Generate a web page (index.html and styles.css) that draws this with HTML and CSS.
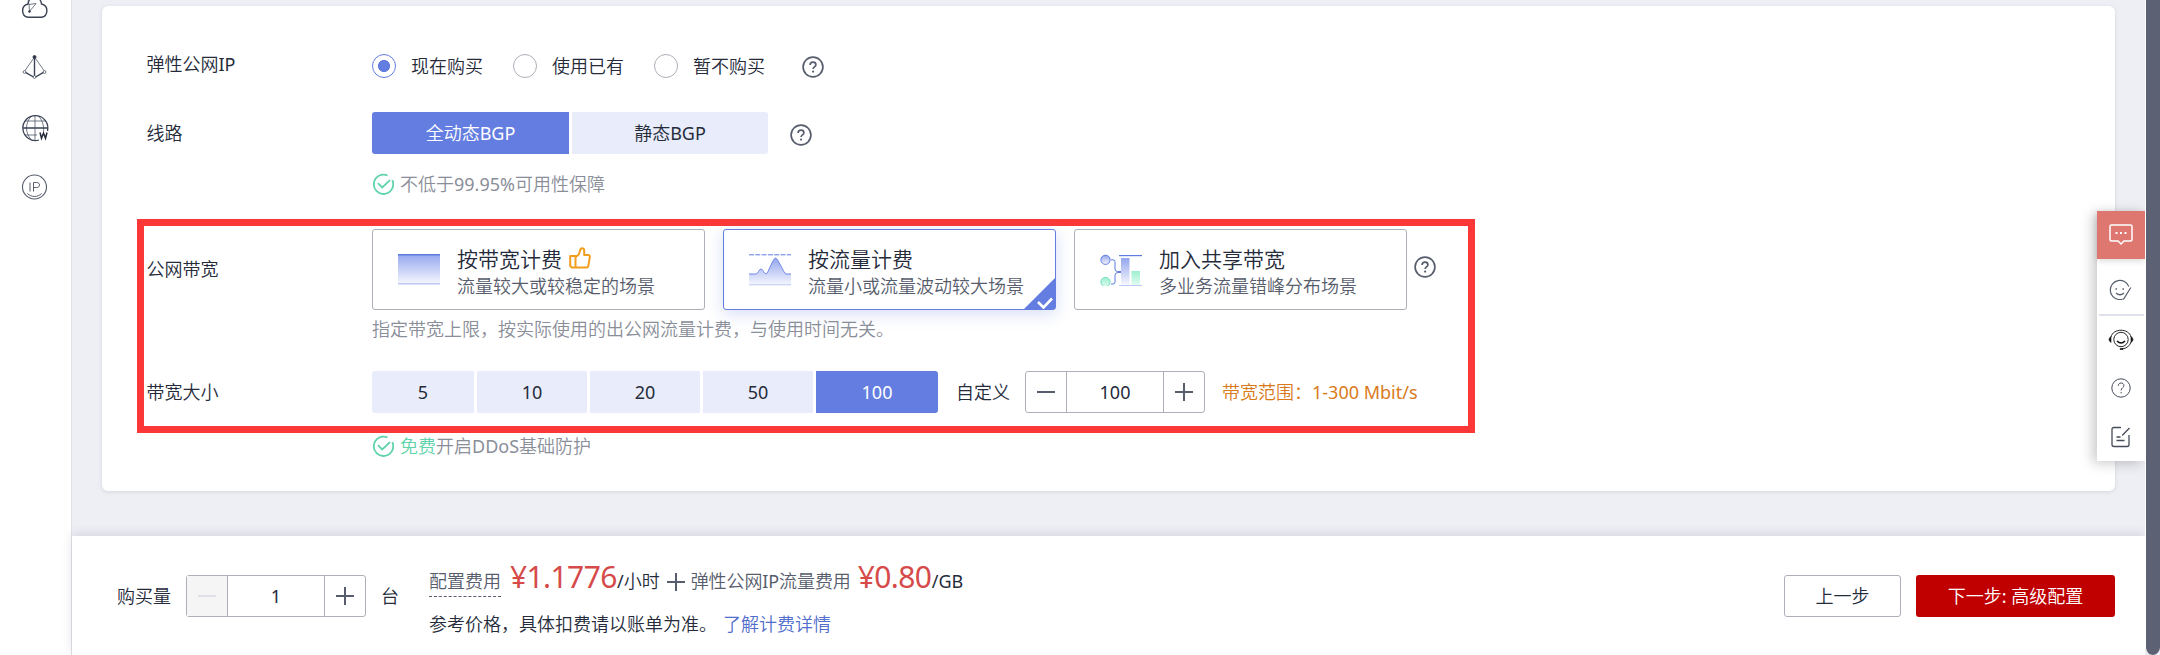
FILE: index.html
```html
<!DOCTYPE html>
<html lang="zh-CN">
<head>
<meta charset="utf-8">
<title>弹性公网IP</title>
<link rel="stylesheet" href="styles.css">
</head>
<body>
<svg class="defs" width="0" height="0" aria-hidden="true">
  <defs>
    <linearGradient id="blueFade" x1="0" y1="0" x2="0" y2="1"><stop offset="0" stop-color="#94a6ee"/><stop offset="1" stop-color="#f6f7fe"/></linearGradient>
    <linearGradient id="greenFade" x1="0" y1="0" x2="0" y2="1"><stop offset="0" stop-color="#9cf0d0"/><stop offset="1" stop-color="#e3fbf2"/></linearGradient>
    <symbol id="help" viewBox="0 0 22 22"><g fill="none" stroke="#575d6c" stroke-width="1.7"><circle cx="11" cy="11" r="9.9"/><path d="M8.1 8.9C8.1 7 9.3 6.1 11 6.1s2.9 1 2.9 2.6c0 2.1-2.8 2.3-2.8 4.4"/></g><circle cx="11.1" cy="15.6" r="1.1" fill="#575d6c"/></symbol>
    <symbol id="ok" viewBox="0 0 22 22"><g fill="none" stroke="#5fd3a9" stroke-width="1.8"><path d="M20.300 7.200A9.700 9.700 0 1 1 15.600 2.500"/><path d="M6 10.200l4.200 4.200 7.800-7.200"/></g></symbol>
  </defs>
</svg>
<div class="page">
  <nav class="side">
    <svg class="side-icon cloud" width="30" height="30" viewBox="0 0 30 30" fill="none" stroke="#3b4254"><path stroke-width="1.400" d="M8 13a6.800 6.800 0 0 0 0 13.300h13.500a6.800 6.800 0 0 0 0-13.300c-1-9-12.500-9-13.500 0z"/><path stroke-width=".7" d="M9 13.500l7-1-6.500 8zM9 13.500l-1-4"/><circle cx="9.500" cy="20.500" r=".9" fill="#3b4254"/></svg>
    <svg class="side-icon pyramid" width="30" height="30" viewBox="0 0 30 30" fill="none" stroke="#3b4254"><path stroke-width=".7" d="M14.500 5L4 20M14.500 5L25 20"/><path stroke-width="1.400" d="M14.500 5v20M5.500 20.300l8 4.700M23.500 20.300l-8 4.700"/><circle cx="14.500" cy="5" r="1.500" fill="#252b3a"/><g fill="#fff" stroke-width=".7"><circle cx="4.500" cy="20" r="1.400"/><circle cx="24.500" cy="20" r="1.400"/><circle cx="14.500" cy="25" r="1.400"/></g></svg>
    <svg class="side-icon globe" width="30" height="30" viewBox="0 0 30 30" fill="none" stroke="#3b4254"><path stroke-width="1.300" d="M19 27A12.500 12.500 0 1 1 27.500 18M2.500 15h25"/><path stroke-width=".7" d="M15 2.500v25M5 8h20M5 22h12M11 3.500c-6 7-6 16 0 23M19 3.500c4 5 5 10 4.500 15"/><path stroke-width="1.500" stroke="#252b3a" d="M20 19.500l1.500 5.700 2-5.200 2 5.200 1.500-5.700"/></svg>
    <svg class="side-icon ip" width="30" height="30" viewBox="0 0 30 30" fill="none" stroke="#575d6c"><circle cx="14.500" cy="15" r="12" stroke-width="1.100"/><path stroke-width="1" d="M10 10.500v9M13.500 19.500v-9h3.200c3.800 0 3.800 5 0 5h-3.200M7.500 21.500c4 4 10 4 14 0"/></svg>
  </nav>
  <div class="main">
    <section class="card">
      <div class="row row-eip">
        <div class="label">弹性公网IP</div>
        <div class="radios">
          <span class="radio on"><i></i>现在购买</span><span class="radio"><i></i>使用已有</span><span class="radio"><i></i>暂不购买</span>
          <svg class="help"><use href="#help"/></svg>
        </div>
      </div>
      <div class="row row-line">
        <div class="label">线路</div>
        <div class="seg line-seg"><span class="on">全动态BGP</span><span>静态BGP</span></div>
        <svg class="help"><use href="#help"/></svg>
      </div>
      <div class="tip"><svg class="ok"><use href="#ok"/></svg><span>不低于99.95%可用性保障</span></div>
      <div class="marked">
        <div class="row row-plan">
          <div class="label">公网带宽</div>
          <div class="plans">
            <div class="plan">
              <svg class="plan-icon" viewBox="0 0 42 32"><path fill="url(#blueFade)" d="M0 0h42v30H0z"/><path fill="#5e7ce0" d="M0 0h42v1.500H0z"/><path fill="#bcc8f5" d="M0 29h42v1.500H0z"/></svg>
              <div class="plan-text"><div class="plan-title">按带宽计费<svg class="thumb" viewBox="0 0 22 22" fill="none" stroke="#f29d1b" stroke-width="2" stroke-linejoin="round"><path d="M1.200 9h5.300v11.500H2.800L1.200 19zM6.500 10.200l3.300-2.700L11.300 3c.3-2.600 3.900-2.200 3.900.8v4.300h4c1.200 0 1.800.9 1.600 2l-1.400 8.500c-.2 1.200-.9 1.900-2 1.900H6.500z"/></svg></div><div class="plan-sub">流量较大或较稳定的场景</div></div>
            </div>
            <div class="plan on">
              <svg class="plan-icon" viewBox="0 0 42 32"><path stroke="#5e7ce0" stroke-dasharray="5 1.300" d="M0 .8h42"/><path fill="url(#blueFade)" d="M0 20h7c2 0 3-5 5-5s3 5 5 5S24 4 26.500 4 35 20 37 20h5v11H0z"/><path fill="none" stroke="#6f87e5" d="M0 20h7c2 0 3-5 5-5s3 5 5 5S24 4 26.500 4 35 20 37 20h5"/><path stroke="#bcc8f5" d="M0 30.800h42"/></svg>
              <div class="plan-text"><div class="plan-title">按流量计费</div><div class="plan-sub">流量小或流量波动较大场景</div></div>
              <svg class="corner" viewBox="0 0 31 31"><path fill="#637de0" d="M31 0v31H0z"/><path fill="none" stroke="#fff" stroke-width="2.600" d="M14 24l5.500 5.500 8.500-9"/></svg>
            </div>
            <div class="plan">
              <svg class="plan-icon" viewBox="0 0 42 32"><circle cx="5.500" cy="5.800" r="4.600" fill="url(#blueFade)" stroke="#5e7ce0"/><circle cx="5.500" cy="28" r="4.600" fill="url(#greenFade)" stroke="#6fdfba"/><path fill="none" stroke="#5e7ce0" d="M11 5.800h2q2 0 2 2V15q0 2.500 2.500 2.500H21M21 18.500h-3q-3 0-3 3V28q0 2-2 2h-2"/><path fill="#5e7ce0" d="M19 1h23v1.200H19z"/><path fill="url(#blueFade)" d="M21 4h8.500v27H21z"/><path fill="url(#greenFade)" d="M31.500 17H40v14h-8.500z"/><path fill="#bcc8f5" d="M19 31h23v1H19z"/></svg>
              <div class="plan-text"><div class="plan-title">加入共享带宽</div><div class="plan-sub">多业务流量错峰分布场景</div></div>
            </div>
          </div>
          <svg class="help"><use href="#help"/></svg>
        </div>
        <div class="note">指定带宽上限，按实际使用的出公网流量计费，与使用时间无关。</div>
        <div class="row row-size">
          <div class="label">带宽大小</div>
          <div class="seg size-seg"><span>5</span><span>10</span><span>20</span><span>50</span><span class="on">100</span></div>
          <div class="custom">自定义</div>
          <div class="stepper"><b class="minus"></b><span>100</span><b class="plus"></b></div>
          <div class="range">带宽范围：1-300 Mbit/s</div>
        </div>
      </div>
      <div class="tip tip-ddos"><svg class="ok"><use href="#ok"/></svg><span><em>免费</em>开启DDoS基础防护</span></div>
    </section>
    <footer class="footer">
      <span>购买量</span>
      <div class="stepper qty"><b class="minus off"></b><span>1</span><b class="plus"></b></div>
      <span class="unit">台</span>
      <div class="cost">
        <div class="prices"><span class="dashed">配置费用</span><strong class="p1">¥1.1776</strong><span class="per">/小时</span><i class="add"></i><span class="muted">弹性公网IP流量费用</span><strong class="p2">¥0.80</strong><span class="per">/GB</span></div>
        <div class="ref">参考价格，具体扣费请以账单为准。<a>了解计费详情</a></div>
      </div>
      <div class="btn prev">上一步</div>
      <div class="btn next">下一步: 高级配置</div>
    </footer>
  </div>
  <div class="scroll"></div>
  <aside class="float">
    <div class="chat"><svg width="24" height="22" viewBox="0 0 24 22" fill="none" stroke="#fff" stroke-width="1.500"><path d="M2.500 1h19q1.500 0 1.500 1.500v13q0 1.500-1.500 1.500H15l-3 3-3-3H2.500Q1 17 1 15.500v-13Q1 1 2.500 1z"/><path stroke-dasharray="2 2.500" stroke-width="2" d="M6.500 9h11"/></svg></div>
    <svg class="f-smile" width="24" height="22" viewBox="0 0 24 22" fill="none" stroke="#575d6c"><path stroke-width="1.200" d="M13 20.500H9.500A9.600 9.600 0 1 1 19.800 7.500M21.800 8.500L15 19.500l-1.500 1"/><path stroke-width="1.300" d="M7 14q4 3.500 8 0M6.500 10H8M13.500 10H15"/></svg>
    <hr>
    <svg class="f-agent" width="26" height="22" viewBox="0 0 26 22" fill="none" stroke="#111"><circle cx="13" cy="10.500" r="7.200" stroke-width=".9"/><path stroke-width=".9" d="M3 8C5-1 21-1 23 8M23 13q-2 6-9 7"/><path stroke-width="1.500" d="M9 12q4 4 8 0"/><path fill="#111" stroke-width=".6" d="M3 7.500v6q-4-3 0-6zM23 7.500v6q4-3 0-6zM12 19.500h3v1h-3z"/></svg>
    <svg class="f-help" width="20" height="20" viewBox="0 0 20 20" fill="none" stroke="#454b59"><circle cx="10" cy="10" r="9.200"/><path d="M7.300 7.900c0-4 5.600-3.700 5.600-.3 0 2.200-2.800 2.200-2.800 4.800M10.100 14v1.300"/></svg>
    <svg class="f-edit" width="20" height="22" viewBox="0 0 20 22" fill="none" stroke="#454b59" stroke-width="1.300"><path d="M10 1.500H3q-2 0-2 2v15q0 2 2 2h13q2 0 2-2V9M18.500 2l-7.300 7.500M5.500 11h4M5.500 14.500h8"/></svg>
  </aside>
</div>
</body>
</html>
```
FILE: styles.css
```css
* { box-sizing: border-box; }
body { margin: 0; overflow: hidden; background: #eeeff5; color: #252b3a; font: 400 18px/24px "Noto Sans", "Noto Sans CJK SC DemiLight", "Noto Sans CJK SC", sans-serif; }
i, em { font-style: normal; }
.defs { position: absolute; }
.page { display: flex; width: 2160px; height: 655px; position: relative; overflow: hidden; }
.side { width: 72px; flex: none; background: #fff; border-right: 1px solid #dfe1e6; padding-left: 20px; display: flex; flex-direction: column; gap: 30px; }
.side-icon { flex: none; display: block; }
.cloud { margin: -9px 0 1px; }
.globe { margin-top: 1px; }
.ip { margin-top: -1px; }
.main { flex: 1; display: flex; flex-direction: column; }
.card { width: 2013px; height: 485px; margin: 6px 0 45px 30px; background: #fff; border-radius: 6px; box-shadow: 0 1px 4px rgba(37,43,58,.12); }
.row { display: flex; }
.label { width: 226px; padding-left: .5px; }
.row-eip, .row-line { padding-left: 44px; }
.row-eip { padding-top: 47px; height: 106px; }
.row-eip .label { margin-top: -1px; }
.radios { display: flex; margin-top: 1px; height: 24px; }
.radio { display: flex; width: 141px; gap: 15px; }
.radio i { width: 24px; height: 24px; border: 1px solid #adb0b8; border-radius: 50%; }
.radio.on i { border-color: #637de0; background: radial-gradient(circle, #637de0 5.700px, transparent 6.300px); }
.help { width: 22px; height: 22px; flex: none; }
.radios .help { margin: 2px 0 0 7px; }
.row-line { height: 42px; }
.row-line .label { padding-top: 9px; }
.row-line .help { margin: 12px 0 0 22px; }
.seg { display: flex; gap: 3px; height: 42px; line-height: 42px; text-align: center; }
.seg span { background: #e9edfb; }
.seg .on { background: #637de0; color: #fff; }
.seg span:first-child { border-radius: 3px 0 0 3px; }
.seg span:last-child { border-radius: 0 3px 3px 0; }
.line-seg span { width: 196px; }
.line-seg .on { width: 197px; }
.tip { display: flex; gap: 6px; padding: 18px 0 0 270px; color: #8a8e99; }
.tip em { color: #5fd3a9; }
.ok { width: 22px; height: 22px; margin-top: 1px; }
.marked { width: 1338px; height: 214px; margin: 23px 0 0 35px; border: 7px solid #fc3737; padding: 3px 0 0 2px; }
.row-plan { height: 81px; }
.row-plan .label { padding-top: 28px; }
.plans { display: flex; gap: 18px; }
.plan { width: 333px; height: 81px; border: 1px solid #adb0b8; border-radius: 3px; padding: 16px 0 0 25px; display: flex; gap: 17px; position: relative; background: #fff; }
.plan.on { border-color: #637de0; box-shadow: 0 4px 16px rgba(94,124,224,.25); }
.plan-icon { width: 42px; height: 32px; margin-top: 8px; flex: none; }
.plan-title { font-size: 21px; line-height: 26px; display: flex; align-items: center; gap: 7px; }
.plan-sub { color: #575d6c; line-height: 24px; margin-top: 2px; white-space: nowrap; }
.thumb { width: 22px; height: 22px; margin-top: -2px; }
.corner { position: absolute; right: 0; bottom: 0; width: 31px; height: 31px; }
.row-plan .help { margin: 27px 0 0 7px; }
.note { padding: 7px 0 0 226px; color: #8a8e99; position: relative; }
.row-size { margin-top: 30px; line-height: 42px; }
.size-seg span { width: 110px; }
.size-seg span:first-child { width: 102px; }
.size-seg span:last-child { width: 122px; }
.custom { margin-left: 18px; width: 69px; }
.stepper { width: 180px; height: 42px; border: 1px solid #adb0b8; border-radius: 3px; display: flex; line-height: 40px; }
.stepper span { flex: 1; text-align: center; border: solid #adb0b8; border-width: 0 1px; }
.stepper b { width: 40px; }
.minus { background: linear-gradient(#575d6c, #575d6c) center / 18px 2px no-repeat; }
.plus { background: linear-gradient(#575d6c, #575d6c) center / 18px 2px no-repeat, linear-gradient(#575d6c, #575d6c) center / 2px 18px no-repeat; }
.minus.off { background: linear-gradient(#dfe1e6, #dfe1e6) center / 18px 2px no-repeat #f5f5f6; }
.range { margin-left: 17px; color: #d97a1a; }
.tip-ddos { padding-top: 1px; }
.footer { height: 119px; background: #fff; box-shadow: 0 -2px 10px rgba(37,43,58,.12); display: flex; padding: 39px 30px 0 45px; line-height: 42px; }
.qty { margin: 0 15px; }
.unit { width: 48px; }
.cost { flex: 1; margin-top: -18px; }
.prices { height: 56px; line-height: 49px; display: flex; }
.dashed { color: #575d6c; height: 40px; border-bottom: 1px dashed #575d6c; }
.prices strong { font-weight: inherit; font-size: 30px; letter-spacing: -.6px; color: #d64a4a; line-height: 40px; }
.p1 { margin-left: 9px; width: 107px; }
.p2 { margin-left: 7px; width: 74px; }
.add { width: 18px; height: 18px; margin: 16px 6px 0 7px; background: linear-gradient(#575d6c, #575d6c) center / 18px 2px no-repeat, linear-gradient(#575d6c, #575d6c) center / 2px 18px no-repeat; }
.muted { color: #575d6c; letter-spacing: -.1px; }
.ref { line-height: 24px; margin-top: -1px; }
.ref a { color: #526ecc; margin-left: 6px; }
.btn { height: 42px; border-radius: 3px; text-align: center; }
.prev { width: 117px; border: 1px solid #adb0b8; line-height: 40px; margin-right: 15px; }
.next { width: 199px; background: #c00000; color: #fff; }
.scroll { width: 15px; height: 655px; border-left: 1px solid #fff; background: #5c6173; border-radius: 0 0 8px 8px; }
.float { position: absolute; left: 2097px; top: 211px; width: 48px; height: 250px; background: #fff; box-shadow: -4px 2px 12px rgba(0,0,0,.22); display: flex; flex-direction: column; align-items: center; clip-path: inset(-20px 0 -20px -20px); }
.chat { width: 48px; height: 48px; background: #de7770; display: flex; align-items: center; justify-content: center; box-shadow: 0 2px 6px rgba(0,0,0,.15); }
.f-smile { margin-top: 20px; }
.float hr { width: 45px; margin: 13px 0 13px; border: 0; border-top: 2px solid #dfe1ea; }
.f-help { margin-top: 27px; }
.f-edit { margin-top: 28px; }
```
